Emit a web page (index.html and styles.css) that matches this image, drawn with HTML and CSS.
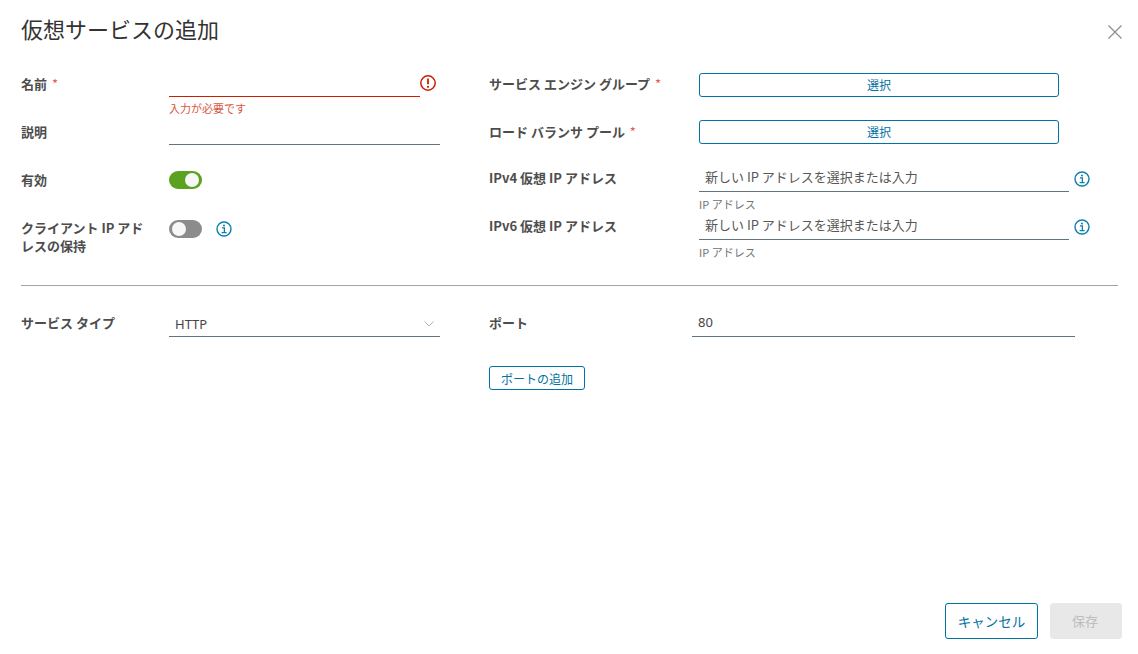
FILE: index.html
```html
<!DOCTYPE html>
<html lang="ja">
<head>
<meta charset="utf-8">
<title>仮想サービスの追加</title>
<link rel="stylesheet" href="styles.css">
</head>
<body>
<div class="modal">
  <header class="head">
    <h1 class="title">仮想サービスの追加</h1>
    <svg class="close" width="16" height="16" viewBox="0 0 16 16"><path d="M1.500 1.500l13 13M14.500 1.500l-13 13" fill="none" stroke="#8c8c8c" stroke-width="1.2"/></svg>
  </header>
  <section class="top">
    <div class="col">
      <div class="row">
        <div class="label lw-l">名前 <span class="req">*</span></div>
        <div class="field error-field w-l"><span class="value"></span>
          <div class="error">入力が必要です</div>
        </div>
        <svg class="err-icon" width="18" height="18" viewBox="0 0 18 18"><circle cx="9" cy="9" r="7.2" fill="none" stroke="#c92100" stroke-width="1.5"/><path d="M9 4.6v5.6" stroke="#c92100" stroke-width="1.8" fill="none"/><circle cx="9" cy="12.8" r="1.1" fill="#c92100"/></svg>
      </div>
      <div class="row">
        <div class="label lw-l">説明</div>
        <div class="field w-f"></div>
      </div>
      <div class="row">
        <div class="label lw-l">有効</div>
        <div class="toggle on"><span class="knob"></span></div>
      </div>
      <div class="row row-top">
        <div class="label lw-l label-wrap">クライアント IP アドレスの保持</div>
        <div class="toggle toggle-low"><span class="knob"></span></div>
        <svg class="info info-left" width="16" height="16" viewBox="0 0 16 16"><circle cx="8" cy="8" r="7" fill="none" stroke="#0b7fab" stroke-width="1.4"/><circle cx="8" cy="4.5" r="1" fill="#0b7fab"/><path d="M6 6.900h2.400v4.600M5.600 11.700h5" fill="none" stroke="#0b7fab" stroke-width="1.3"/></svg>
      </div>
    </div>
    <div class="col">
      <div class="row">
        <div class="label lw-r">サービス エンジン グループ <span class="req">*</span></div>
        <button class="btn btn-select btn-first">選択</button>
      </div>
      <div class="row">
        <div class="label lw-r">ロード バランサ プール <span class="req">*</span></div>
        <button class="btn btn-select">選択</button>
      </div>
      <div class="row row-ip">
        <div class="label lw-r">IPv4 仮想 IP アドレス</div>
        <div class="field ip-field"><span class="placeholder">新しい IP アドレスを選択または入力</span>
          <div class="hint">IP アドレス</div>
        </div>
        <svg class="info info-right" width="16" height="16" viewBox="0 0 16 16"><circle cx="8" cy="8" r="7" fill="none" stroke="#0b7fab" stroke-width="1.4"/><circle cx="8" cy="4.5" r="1" fill="#0b7fab"/><path d="M6 6.900h2.400v4.600M5.600 11.700h5" fill="none" stroke="#0b7fab" stroke-width="1.3"/></svg>
      </div>
      <div class="row row-ip">
        <div class="label lw-r">IPv6 仮想 IP アドレス</div>
        <div class="field ip-field"><span class="placeholder">新しい IP アドレスを選択または入力</span>
          <div class="hint">IP アドレス</div>
        </div>
        <svg class="info info-right" width="16" height="16" viewBox="0 0 16 16"><circle cx="8" cy="8" r="7" fill="none" stroke="#0b7fab" stroke-width="1.4"/><circle cx="8" cy="4.5" r="1" fill="#0b7fab"/><path d="M6 6.900h2.400v4.600M5.600 11.700h5" fill="none" stroke="#0b7fab" stroke-width="1.3"/></svg>
      </div>
    </div>
  </section>
  <hr class="divider">
  <section class="bottom">
    <div class="col">
      <div class="row row-b">
        <div class="label lw-l">サービス タイプ</div>
        <div class="field w-f select"><span class="value">HTTP</span>
          <svg class="chev" width="10" height="6" viewBox="0 0 10 6"><path d="M.5.5L5 5 9.500.5" fill="none" stroke="#b3b3b3" stroke-width="1"/></svg>
        </div>
      </div>
    </div>
    <div class="col">
      <div class="row row-b">
        <div class="label lw-p">ポート</div>
        <div class="field port"><span class="value">80</span></div>
      </div>
      <button class="btn btn-add">ポートの追加</button>
    </div>
  </section>
  <footer class="foot">
    <button class="btn btn-cancel">キャンセル</button>
    <button class="btn btn-save" disabled>保存</button>
  </footer>
</div>
</body>
</html>
```
FILE: styles.css
```css
* { box-sizing: border-box; }
html, body { margin: 0; height: 100%; background: #fff; }
body { font-family: "Noto Sans CJK JP", "Noto Sans", sans-serif; color: #454545; overflow: hidden; }
.modal { height: 654px; display: flex; flex-direction: column; padding: 0 20px 15px 21px; }
.head { height: 60px; display: flex; align-items: flex-start; justify-content: space-between; }
.title { margin: 12px 0 0; font-size: 22px; line-height: 32px; font-weight: 400; color: #333; }
.close { margin: 24px -5px 0 0; }
.top, .bottom { display: grid; grid-template-columns: 468px 1fr; }
.row { height: 48px; display: flex; align-items: center; }
.row-top { align-items: flex-start; padding-top: 15px; }
.label { flex: none; font-size: 13px; line-height: 18px; font-weight: 700; color: #4d4d4d; }
.lw-l { width: 148px; }
.lw-r { width: 210px; }
.lw-p { width: 203px; }
.label-wrap { padding-right: 20px; }
.req { color: #e35d4a; font-weight: 400; margin-left: 2px; }
.field { position: relative; height: 25px; border-bottom: 1px solid #5f7380; font-size: 13px; line-height: 24px; margin-top: 1px; }
.w-l { width: 251px; }
.w-f { width: 271px; }
.error-field { border-bottom-color: #c92100; }
.error { position: absolute; left: 0; top: 28px; font-size: 11px; line-height: 16px; color: #d9573f; white-space: nowrap; }
.err-icon { margin: -2px 0 0 -1px; }
.toggle { width: 33px; height: 18px; border-radius: 9px; background: #8c8c8c; padding: 2px; position: relative; }
.toggle.on { background: #5aa220; display: flex; justify-content: flex-end; }
.toggle-low { margin-top: 1px; }
.knob { display: block; width: 14px; height: 14px; margin: 0 1px; border-radius: 50%; background: #f7f7f7; }
.info { flex: none; }
.info-left { margin: 2px 0 0 14px; }
.info-right { margin: -2px 0 0 5px; }
.btn { font-family: inherit; background: #fff; border: 1px solid #0072a3; border-radius: 3px; color: #0072a3; font-size: 12px; padding: 0; cursor: pointer; }
.btn-select { width: 360px; height: 24px; padding-bottom: 2px; }
.btn-first { margin-top: 2px; }
.row-ip .label { margin-top: -4px; }
.ip-field { width: 370px; margin-top: -2px; }
.placeholder { padding-left: 6px; color: #565656; display: block; margin-top: -2px; }
.hint { position: absolute; left: 0; top: 29px; font-size: 11px; line-height: 16px; color: #737373; white-space: nowrap; }
.divider { margin: 33px 0 0; border: 0; border-top: 1px solid #a3a3a3; height: 0; }
.row-b { margin-top: 14px; }
.row-b .label { margin-top: -2px; }
.select { display: flex; align-items: center; justify-content: space-between; padding: 0 6px; }
.value { color: #454545; }
.select .value { font-family: "Noto Sans", sans-serif; }
.port { width: 383px; padding-left: 6px; }
.port .value { font-family: "Noto Sans", sans-serif; display: block; margin-top: -2px; }
.btn-add { width: 96px; height: 24px; margin-top: 18px; display: block; }
.foot { margin-top: auto; margin-right: -4px; display: flex; justify-content: flex-end; gap: 12px; }
.btn-cancel { width: 93px; height: 36px; font-size: 13.500px; padding-bottom: 1px; }
.btn-save { width: 72px; height: 36px; font-size: 13px; background: #e8e8e8; border-color: #e8e8e8; color: #bdbdbd; cursor: default; padding: 0 2px 2px 0; }
```
